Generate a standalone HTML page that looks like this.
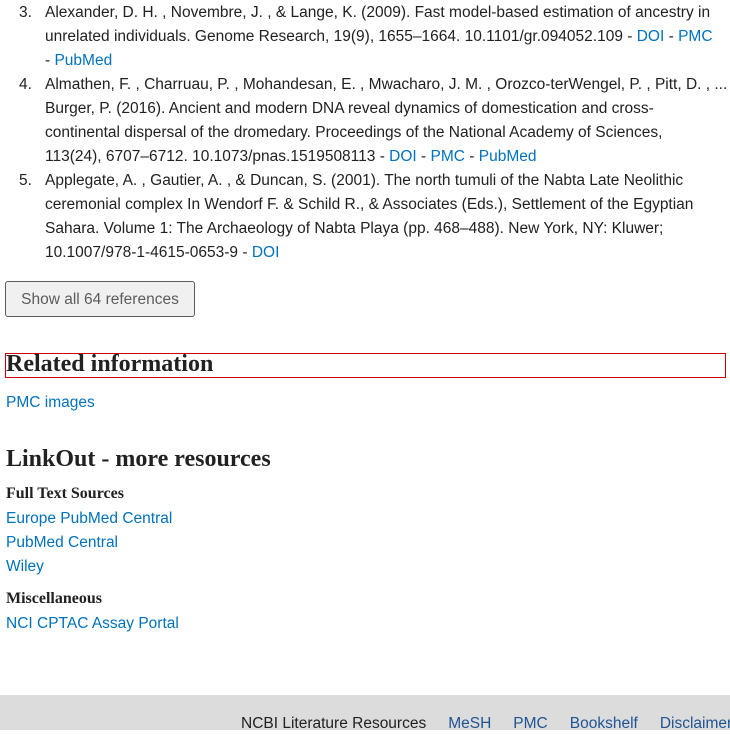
<!DOCTYPE html>
<html><head><meta charset="utf-8"><style>
body{margin:0;width:730px;height:730px;overflow:hidden;background:#fff;font-family:"Liberation Sans",sans-serif;color:#212121;font-size:15.5px;position:relative}
a{color:#0071bc;text-decoration:none}
.l{position:absolute;white-space:nowrap;line-height:24px}
.n{position:absolute;left:19px;line-height:24px}
.h{font-family:"Liberation Serif",serif;font-weight:bold;position:absolute;left:6px;font-size:24px}
.s{font-family:"Liberation Serif",serif;font-weight:bold;position:absolute;left:6px;font-size:16px}
</style></head><body>
<div class="n" style="top:1px">3.</div>
<div class="l" style="left:45px;top:1px">Alexander, D. H. , Novembre, J. , &amp; Lange, K. (2009). Fast model-based estimation of ancestry in</div>
<div class="l" style="left:45px;top:25px">unrelated individuals. Genome Research, 19(9), 1655–1664. 10.1101/gr.094052.109 - <a>DOI</a> - <a>PMC</a></div>
<div class="l" style="left:45px;top:49px">- <a>PubMed</a></div>
<div class="n" style="top:73px">4.</div>
<div class="l" style="left:45px;top:73px">Almathen, F. , Charruau, P. , Mohandesan, E. , Mwacharo, J. M. , Orozco-terWengel, P. , Pitt, D. , ...</div>
<div class="l" style="left:45px;top:97px">Burger, P. (2016). Ancient and modern DNA reveal dynamics of domestication and cross-</div>
<div class="l" style="left:45px;top:121px">continental dispersal of the dromedary. Proceedings of the National Academy of Sciences,</div>
<div class="l" style="left:45px;top:145px">113(24), 6707–6712. 10.1073/pnas.1519508113 - <a>DOI</a> - <a>PMC</a> - <a>PubMed</a></div>
<div class="n" style="top:169px">5.</div>
<div class="l" style="left:45px;top:169px">Applegate, A. , Gautier, A. , &amp; Duncan, S. (2001). The north tumuli of the Nabta Late Neolithic</div>
<div class="l" style="left:45px;top:193px">ceremonial complex In Wendorf F. &amp; Schild R., &amp; Associates (Eds.), Settlement of the Egyptian</div>
<div class="l" style="left:45px;top:217px">Sahara. Volume 1: The Archaeology of Nabta Playa (pp. 468–488). New York, NY: Kluwer;</div>
<div class="l" style="left:45px;top:241px">10.1007/978-1-4615-0653-9 - <a>DOI</a></div>
<div style="position:absolute;left:5px;top:281px;width:188px;height:34px;background:#f0f0f0;border:1px solid #5c5c5c;border-radius:3px;color:#5c5c5c;text-align:center;line-height:35px;font-size:15.5px">Show all 64 references</div>
<div style="position:absolute;left:5px;top:353px;width:719px;height:23px;border:1px solid #c00"></div>
<div class="h" style="top:351px">Related information</div>
<div class="l" style="left:6px;top:391px"><a>PMC images</a></div>
<div class="h" style="top:446px">LinkOut - more resources</div>
<div class="s" style="top:485px">Full Text Sources</div>
<div class="l" style="left:6px;top:507px"><a>Europe PubMed Central</a></div>
<div class="l" style="left:6px;top:531px"><a>PubMed Central</a></div>
<div class="l" style="left:6px;top:555px"><a>Wiley</a></div>
<div class="s" style="top:590px">Miscellaneous</div>
<div class="l" style="left:6px;top:612px"><a>NCI CPTAC Assay Portal</a></div>
<div style="position:absolute;left:0;top:695px;width:730px;height:35px;background:#dcdcdc"></div>
<div class="l" style="left:241px;top:712px">NCBI Literature Resources<span style="display:inline-block;width:22px"></span><a style="color:#205493">MeSH</a><span style="display:inline-block;width:22px"></span><a style="color:#205493">PMC</a><span style="display:inline-block;width:22px"></span><a style="color:#205493">Bookshelf</a><span style="display:inline-block;width:22px"></span><a style="color:#205493">Disclaimer</a></div>
</body></html>
